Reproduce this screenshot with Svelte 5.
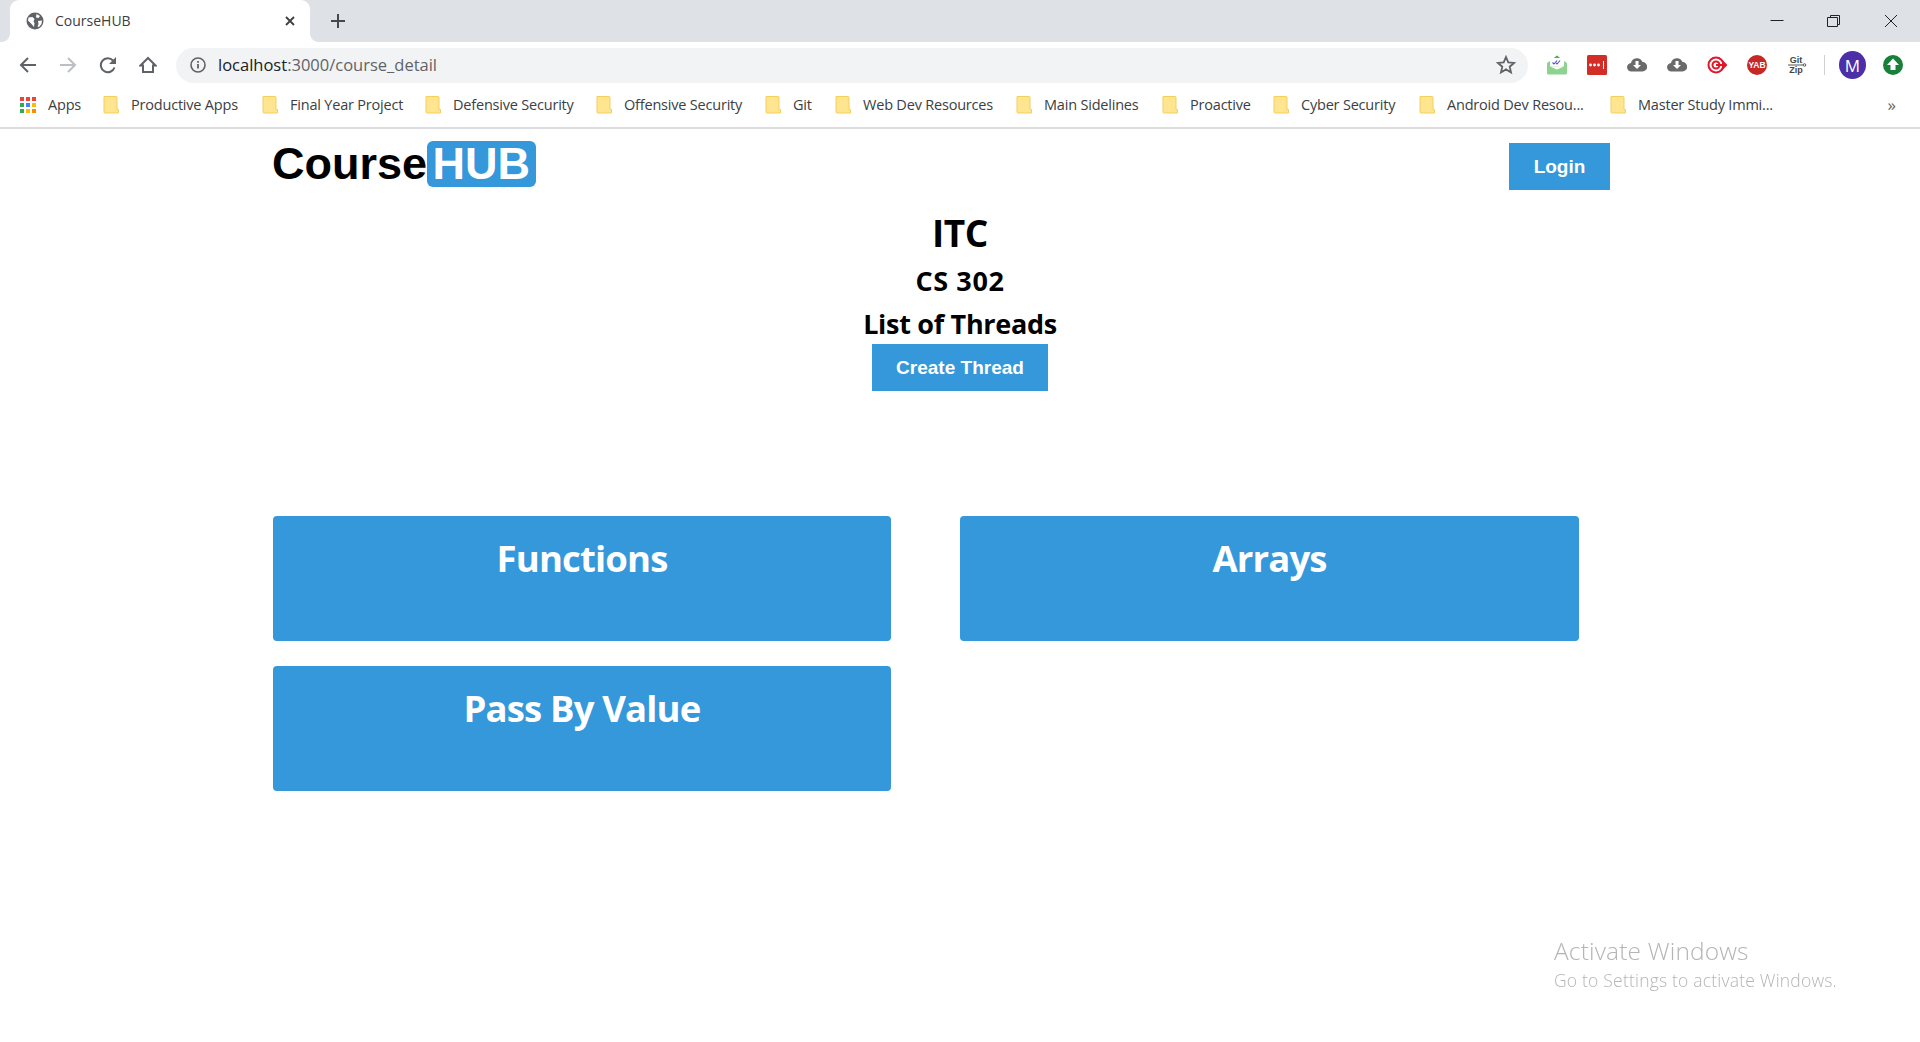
<script>
  const bookmarks = [
    { t: 'Productive Apps', w: 108 },
    { t: 'Final Year Project', w: 112 },
    { t: 'Defensive Security', w: 120 },
    { t: 'Offensive Security', w: 118 },
    { t: 'Git', w: 19 },
    { t: 'Web Dev Resources', w: 130 },
    { t: 'Main Sidelines', w: 95 },
    { t: 'Proactive', w: 60 },
    { t: 'Cyber Security', w: 95 },
    { t: 'Android Dev Resou...', w: 140 },
    { t: 'Master Study Immi...', w: 136 }
  ];
  const threads = ['Functions', 'Arrays', 'Pass By Value'];
  const appColors = ['#e8453c','#e8453c','#e8453c','#34a853','#4285f4','#fbbc05','#34a853','#fbbc05','#fb8c00'];
</script>

<div class="chrome">
  <div class="tabstrip">
    <div class="tab">
      <svg class="globe" viewBox="0 0 18 18"><circle cx="9" cy="9" r="8.500" fill="#5f6368"/><path d="M2.500 5.500l4-.5 2 2-1 2.500 1 1.500-.5 4-2.500-3L2 8.500zM10.500 2l3.500 2-1.500 2-2.500-.5zM12 9l4-.5-.5 3.500-2.500 3-1.500-.5 1-2.500z" fill="#fff"/></svg>
      <span class="tabtitle">CourseHUB</span>
      <svg class="tabclose" viewBox="0 0 10 10"><path d="M1 1l8 8M9 1l-8 8" stroke="#3c4043" stroke-width="1.800" fill="none"/></svg>
    </div>
    <svg class="plus" viewBox="0 0 16 16"><path d="M8 1v14M1 8h14" stroke="#45494d" stroke-width="2" fill="none"/></svg>
    <div class="winctl">
      <svg viewBox="0 0 14 12"><path d="M0.500 5.500h13" stroke="#222" fill="none"/></svg>
      <svg viewBox="0 0 14 12"><path d="M3.500 2.500V.5h9v9h-2M.5 2.500h10v9H.5z" stroke="#222" fill="none"/></svg>
      <svg viewBox="0 0 14 12"><path d="M1 0l12 12M13 0L1 12" stroke="#222" fill="none"/></svg>
    </div>
  </div>

  <div class="toolbar">
    <div class="navs">
      <svg viewBox="0 0 18 18"><path d="M17 9H2M9 2L2 9l7 7" stroke="#5f6368" stroke-width="2" fill="none"/></svg>
      <svg viewBox="0 0 18 18"><path d="M1 9h15M9 2l7 7-7 7" stroke="#bcbfc3" stroke-width="2" fill="none"/></svg>
      <svg viewBox="0 0 18 18"><path d="M15.500 11.500A7 7 0 1 1 14 4.500" stroke="#5f6368" stroke-width="2" fill="none"/><path d="M17 1v7h-7z" fill="#5f6368"/></svg>
      <svg viewBox="0 0 18 18"><path d="M9 2L1.500 9.500H4V16h10V9.500h2.500z" stroke="#5f6368" stroke-width="2" fill="none"/></svg>
    </div>
    <div class="omnibox">
      <svg class="info" viewBox="0 0 16 16"><circle cx="8" cy="8" r="7" stroke="#5f6368" stroke-width="1.600" fill="none"/><path d="M8 7v4.500M8 4v1.800" stroke="#5f6368" stroke-width="1.800"/></svg>
      <span class="url"><span class="host">localhost</span>:3000/course_detail</span>
      <svg class="star" viewBox="0 0 20 20"><path d="M10 2l2.300 5.400 5.800.5-4.400 3.800 1.300 5.700L10 14.400l-5 3 1.300-5.700L1.900 7.900l5.800-.5z" stroke="#5f6368" stroke-width="1.800" fill="none"/></svg>
    </div>
    <div class="exts">
      <svg viewBox="0 0 20 20"><path d="M0 8l7-5 3-2.500L13 3l7 5v10a1.500 1.500 0 0 1-1.500 1.500h-17A1.500 1.500 0 0 1 0 18z" fill="#8ed28f"/><path d="M7 3l3-2.500L13 3z" fill="#4caf50"/><rect x="3" y="3" width="14" height="8.500" rx="1" fill="#fff"/><path d="M3 11.500l7 3 7-3" fill="#fff"/><path d="M5.500 7.500l1.500 1.500 3-3.500M9 8l1 1 3-3.500" stroke="#5a4fcf" stroke-width="1.100" fill="none"/></svg>
      <svg viewBox="0 0 20 20"><rect width="20" height="20" rx="1.500" fill="#d32d27"/><circle cx="3.500" cy="10" r="1.400" fill="#fff"/><circle cx="7.500" cy="10" r="1.400" fill="#fff"/><circle cx="11.500" cy="10" r="1.400" fill="#fff"/><path d="M16.500 6v8" stroke="#fff" stroke-width="1"/></svg>
      <svg viewBox="0 0 20 20"><path d="M4.500 16.500a4.200 4.200 0 0 1-.5-8.400 6 6 0 0 1 11.500-1 4.700 4.700 0 0 1 0 9.400z" fill="#6a6a6a"/><path d="M8.500 6h3v4h2.500L10 14l-4-4h2.500z" fill="#fff"/></svg>
      <svg viewBox="0 0 20 20"><path d="M4.500 16.500a4.200 4.200 0 0 1-.5-8.400 6 6 0 0 1 11.500-1 4.700 4.700 0 0 1 0 9.400z" fill="#6a6a6a"/><path d="M8.500 6h3v4h2.500L10 14l-4-4h2.500z" fill="#fff"/></svg>
      <svg viewBox="0 0 20 20"><circle cx="9" cy="10" r="7.500" stroke="#e0162b" stroke-width="2" fill="none"/><circle cx="9" cy="10" r="3.500" stroke="#e0162b" stroke-width="2" fill="none"/><path d="M9 10h10M16 7l3 3-3 3z" stroke="#e0162b" stroke-width="2" fill="#e0162b"/></svg>
      <svg viewBox="0 0 20 20"><circle cx="10" cy="10" r="10" fill="#c62828"/><text x="10" y="13" class="yab">YAB</text></svg>
      <svg viewBox="0 0 20 20"><text x="9" y="8" class="gz">Git</text><path d="M1 10h15" stroke="#555" stroke-width="1"/><circle cx="17.500" cy="10" r="1.300" fill="none" stroke="#555"/><text x="9" y="18" class="gz">Zip</text></svg>
      <span class="sep"></span>
      <span class="avatar">M</span>
      <svg viewBox="0 0 20 20"><circle cx="10" cy="10" r="10" fill="#188038"/><path d="M10 3.500L16 10h-3.500v5h-5v-5H4z" fill="#fff"/></svg>
    </div>
  </div>

  <div class="bookmarks">
    <svg class="apps" viewBox="0 0 16 16">
      {#each appColors as c, i}
        <rect x={(i % 3) * 6} y={Math.floor(i / 3) * 6} width="4" height="4" fill={c}/>
      {/each}
    </svg>
    <span class="bm-text appslabel">Apps</span>
    {#each bookmarks as b}
      <svg class="folder" viewBox="0 0 16 18"><path d="M1 .5h12a1 1 0 0 1 1 1v12h1.500v3.500H2a1 1 0 0 1-1-1z" fill="#ffe58f" stroke="#f3cf5b"/></svg>
      <span class="bm-text" style="width:{b.w}px">{b.t}</span>
    {/each}
    <span class="more">»</span>
  </div>
</div>

<main class="page">
  <header class="topbar">
    <div class="logo">Course<span class="hub">HUB</span></div>
    <button class="btn login">Login</button>
  </header>
  <section class="intro">
    <h1>ITC</h1>
    <h2 class="code">CS 302</h2>
    <h2 class="list">List of Threads</h2>
    <button class="btn create">Create Thread</button>
  </section>
  <section class="grid">
    {#each threads as t}
      <div class="card">{t}</div>
    {/each}
  </section>
</main>

<div class="watermark">
  <div class="wm1">Activate Windows</div>
  <div class="wm2">Go to Settings to activate Windows.</div>
</div>

<style>
  :global(body) { background: #fff; margin: 0; overflow: hidden; }
  .chrome { font-family: "Open Sans", "Noto Sans", sans-serif; }
  .tabstrip { height: 42px; background: #dee1e6; display: flex; align-items: center; }
  .tab { margin-left: 10px; width: 300px; height: 42px; background: #fff; border-radius: 9px 9px 0 0; display: flex; align-items: center; box-sizing: border-box; padding-left: 16px; position: relative; }
  .tab::before, .tab::after { content: ""; position: absolute; bottom: 0; width: 8px; height: 8px; }
  .tab::before { left: -8px; background: radial-gradient(circle at 0 0, #dee1e6 7.500px, #fff 8px); }
  .tab::after { right: -8px; background: radial-gradient(circle at 100% 0, #dee1e6 7.500px, #fff 8px); }
  .globe { width: 18px; height: 18px; }
  .tabtitle { margin-left: 11px; font-size: 14px; color: #3c4043; flex: 1; margin-bottom: 1px; }
  .tabclose { width: 10px; height: 10px; margin-right: 15px; }
  .plus { width: 16px; height: 16px; margin-left: 20px; }
  .winctl { margin-left: auto; display: flex; gap: 43px; padding-right: 22px; }
  .winctl svg { width: 14px; height: 12px; }
  .toolbar { height: 46px; display: flex; align-items: center; background: #fff; }
  .navs { display: flex; gap: 22px; padding-left: 19px; width: 176px; box-sizing: border-box; }
  .navs svg { width: 18px; height: 18px; }
  .omnibox { width: 1352px; height: 35px; background: #f1f3f4; border-radius: 18px; display: flex; align-items: center; box-sizing: border-box; padding: 0 12px 0 14px; }
  .info { width: 16px; height: 16px; }
  .url { margin: 0 0 2px 12px; font-size: 16.500px; color: #5f6368; flex: 1; }
  .host { color: #202124; }
  .star { width: 20px; height: 20px; }
  .exts { display: flex; align-items: center; gap: 20px; margin-left: 19px; }
  .exts svg { width: 20px; height: 20px; flex: none; }
  .yab { font: bold 8.500px "Liberation Sans", sans-serif; fill: #fff; text-anchor: middle; }
  .gz { font: bold 9px "Liberation Sans", sans-serif; fill: #444; text-anchor: middle; }
  .sep { width: 1px; height: 20px; background: #d0d2d5; margin: 0 -5px 0 -3px; }
  .avatar { width: 27px; height: 28px; border-radius: 50%; background: #4c2fa8; color: #fff; font-size: 17px; display: flex; align-items: center; justify-content: center; margin: 0 -3px 0 -1px; }
  .bookmarks { height: 39px; border-bottom: 2px solid #dadce0; display: flex; align-items: center; padding-left: 20px; }
  .apps { width: 16px; height: 16px; flex: none; margin-bottom: 5px; }
  .bm-text { font-size: 14.500px; letter-spacing: -0.2px; color: #3c4043; white-space: nowrap; margin: 0 23px 7px 12px; }
  .appslabel { margin-right: 22px; width: 33px; }
  .folder { width: 16px; height: 18px; flex: none; margin-bottom: 5px; }
  .more { margin: 0 24px 7px auto; font-size: 17px; color: #5f6368; }
  .page { display: block; }
  .topbar { display: flex; justify-content: space-between; align-items: flex-start; width: 1338px; margin-left: 272px; padding-top: 12px; height: 52px; }
  .logo { font: bold 45px/46px "Liberation Sans", sans-serif; color: #000; display: flex; }
  .hub { background: #3498db; color: #fff; border-radius: 6px; padding: 0 5.500px; }
  .btn { font: bold 19px "Liberation Sans", sans-serif; color: #fff; background: #3498db; border: 0; height: 47px; display: block; }
  .login { width: 101px; margin-top: 2px; }
  .intro { text-align: center; font-family: "Open Sans", sans-serif; color: #000; display: flex; flex-direction: column; align-items: center; }
  h1, h2 { margin: 0; font-weight: 700; }
  h1 { font-size: 37px; line-height: 50px; margin: 15px 0 1px; letter-spacing: -0.4px; }
  h2 { font-size: 27px; line-height: 43px; }
  .code { letter-spacing: 0.6px; }
  .list { letter-spacing: -0.3px; margin-bottom: -1px; }
  .create { width: 176px; }
  .grid { display: grid; grid-template-columns: 618px 619px; column-gap: 69px; row-gap: 25px; margin: 125px 0 0 273px; }
  .card { height: 125px; background: #3498db; border-radius: 4px; color: #fff; font: 700 36.500px/46px "Open Sans", sans-serif; letter-spacing: -0.85px; text-align: center; padding-top: 19px; box-sizing: border-box; }
  .watermark { position: fixed; left: 1554px; top: 936px; font-family: "Open Sans", sans-serif; font-weight: 300; color: #b5b5b5; }
  .wm1 { font-size: 24.500px; line-height: 30px; letter-spacing: 0.15px; }
  .wm2 { font-size: 17.500px; line-height: 28px; letter-spacing: 0.2px; }
</style>
